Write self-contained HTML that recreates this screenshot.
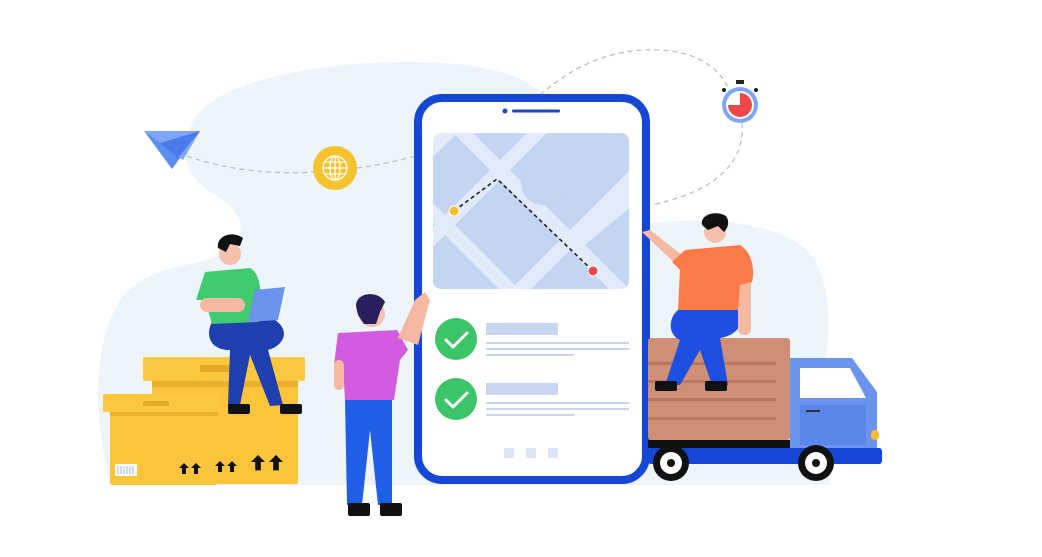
<!DOCTYPE html>
<html><head><meta charset="utf-8"><style>html,body{margin:0;padding:0;background:#fff}svg{display:block}</style></head>
<body>
<svg width="1042" height="557" viewBox="0 0 1042 557" xmlns="http://www.w3.org/2000/svg">
<defs>
<g id="ar"><polygon points="0,-5 5,0 2,0 2,6 -2,6 -2,0 -5,0" fill="#111"/></g>
</defs>
<rect width="1042" height="557" fill="#fff"/>
<!-- background blobs -->
<path d="M190 130 C200 80 330 60 420 62 C520 64 560 90 560 140 L640 140 L640 485 L110 485 C95 420 90 350 120 300 C150 260 200 270 230 250 C250 230 240 210 215 195 C180 175 182 150 190 130 Z" fill="#EEF4FB"/>
<path d="M640 225 C700 215 790 220 815 260 C835 300 830 350 820 380 L830 485 L640 485 Z" fill="#EEF4FB"/>
<!-- dashed routes -->
<path d="M170 150 C220 170 270 175 315 172" fill="none" stroke="#B8C0CC" stroke-width="1.3" stroke-dasharray="5 4"/>
<path d="M357 168 C380 165 400 160 420 155" fill="none" stroke="#B8C0CC" stroke-width="1.3" stroke-dasharray="5 4"/>
<path d="M540 95 C580 60 620 48 660 50 C700 52 720 70 728 88" fill="none" stroke="#B8C0CC" stroke-width="1.3" stroke-dasharray="5 4"/>
<path d="M742 123 C745 160 720 190 652 205" fill="none" stroke="#B8C0CC" stroke-width="1.3" stroke-dasharray="5 4"/>
<!-- plane -->
<path d="M144 131 L200 131 L172 169 Z" fill="#5C8DF0"/>
<path d="M144 131 L200 131 L183 160 Z" fill="#7FA6F5"/>
<path d="M160 143 L200 131 L178 158 Z" fill="#4A7BE8"/>
<!-- globe -->
<circle cx="335" cy="168" r="22" fill="#F6C22E"/>
<g fill="none" stroke="#fff" stroke-width="1.3"><circle cx="335" cy="168" r="12"/><ellipse cx="335" cy="168" rx="5" ry="12"/><line x1="323" y1="168" x2="347" y2="168"/><line x1="325" y1="162" x2="345" y2="162"/><line x1="325" y1="174" x2="345" y2="174"/><line x1="335" y1="156" x2="335" y2="180"/></g>
<!-- timer -->
<rect x="736" y="80" width="8" height="4" fill="#222"/>
<circle cx="740" cy="105" r="18" fill="#7FA6F5"/>
<circle cx="740" cy="105" r="14" fill="#fff"/>
<path d="M740 105 L740 93 A12 12 0 1 1 728 105 Z" fill="#F04848"/>
<circle cx="724" cy="90" r="2" fill="#222"/><circle cx="756" cy="90" r="2" fill="#222"/>
<!-- phone -->
<rect x="418" y="98" width="228" height="382" rx="24" fill="#fff" stroke="#1447D6" stroke-width="8"/>
<circle cx="505" cy="111" r="2.5" fill="#1447D6"/>
<rect x="512" y="109.5" width="48" height="3" rx="1.5" fill="#1447D6"/>
<!-- map -->
<clipPath id="mc"><rect x="433" y="133" width="196" height="156" rx="8"/></clipPath>
<g clip-path="url(#mc)">
<rect x="433" y="133" width="196" height="156" fill="#C3D5F2"/>
<g stroke="#E1EBFA" stroke-width="14" fill="none">
<line x1="440" y1="110" x2="640" y2="310"/>
<line x1="410" y1="190" x2="530" y2="310"/>
<line x1="560" y1="110" x2="420" y2="250"/>
<line x1="660" y1="150" x2="500" y2="310"/>
<line x1="470" y1="110" x2="420" y2="160"/>
<line x1="580" y1="240" x2="640" y2="190"/>
</g>
<circle cx="543" cy="183" r="22" fill="#C3D5F2"/>
</g>
<path d="M454 211 L497 179 L593 271" fill="none" stroke="#222" stroke-width="1.6" stroke-dasharray="4 3"/>
<circle cx="454" cy="211" r="5" fill="#F5BE2A" stroke="#fff" stroke-width="1"/>
<circle cx="593" cy="271" r="5" fill="#F04848" stroke="#fff" stroke-width="1"/>
<!-- checks -->
<circle cx="456" cy="339" r="21" fill="#3CC469"/>
<path d="M446 340 L453 347 L467 333" fill="none" stroke="#fff" stroke-width="3" stroke-linecap="round" stroke-linejoin="round"/>
<circle cx="456" cy="399" r="21" fill="#3CC469"/>
<path d="M446 400 L453 407 L467 393" fill="none" stroke="#fff" stroke-width="3" stroke-linecap="round" stroke-linejoin="round"/>
<g fill="#C8D6F2">
<rect x="486" y="323" width="72" height="12"/><rect x="486" y="342" width="143" height="2"/><rect x="486" y="348" width="143" height="2"/><rect x="486" y="354" width="88" height="2"/>
<rect x="486" y="383" width="72" height="12"/><rect x="486" y="402" width="143" height="2"/><rect x="486" y="408" width="143" height="2"/><rect x="486" y="414" width="88" height="2"/>
</g>
<g fill="#DCE5F7"><rect x="504" y="448" width="10" height="10"/><rect x="526" y="448" width="10" height="10"/><rect x="548" y="448" width="10" height="10"/></g>
<!-- boxes -->
<rect x="152" y="380" width="146" height="104" fill="#FBC43A"/>
<rect x="143" y="357" width="162" height="24" rx="2" fill="#FCC840"/>
<rect x="152" y="381" width="146" height="6" fill="#EBB02C"/>
<rect x="200" y="365" width="37" height="7" fill="#E5AA2A"/>
<rect x="110" y="412" width="108" height="73" rx="3" fill="#FBC43A"/>
<rect x="103" y="394" width="117" height="18" rx="2" fill="#FCC840"/>
<rect x="110" y="412" width="108" height="4" fill="#EBB02C"/>
<rect x="143" y="401" width="26" height="5" fill="#E5AA2A"/>
<rect x="115" y="464" width="22" height="12" fill="#fff"/>
<g stroke="#9CB4E8" stroke-width="1"><line x1="118" y1="466" x2="118" y2="474"/><line x1="121" y1="466" x2="121" y2="474"/><line x1="124" y1="466" x2="124" y2="474"/><line x1="127" y1="466" x2="127" y2="474"/><line x1="130" y1="466" x2="130" y2="474"/><line x1="133" y1="466" x2="133" y2="474"/></g>
<use href="#ar" x="184" y="468"/><use href="#ar" x="196" y="468"/>
<use href="#ar" x="220" y="466"/><use href="#ar" x="232" y="466"/>
<g transform="translate(258 462) scale(1.4)"><use href="#ar"/></g>
<g transform="translate(276 462) scale(1.4)"><use href="#ar"/></g>
<!-- green man -->
<path d="M212 322 L275 320 C290 330 285 345 268 350 L283 405 L270 406 L250 355 L245 380 L240 405 L228 405 L230 350 C210 350 205 335 212 322 Z" fill="#1E3FAE"/>
<rect x="228" y="404" width="22" height="10" rx="2" fill="#111"/>
<rect x="280" y="404" width="22" height="10" rx="2" fill="#111"/>
<path d="M205 272 L250 268 C262 275 262 295 258 322 L212 324 L205 300 L196 300 Z" fill="#3FCB6E"/>
<rect x="200" y="298" width="45" height="14" rx="7" fill="#F5B9A2"/>
<path d="M255 290 L285 287 L278 320 L248 322 Z" fill="#6C93EE"/>
<circle cx="230" cy="254" r="11" fill="#F5C1AC"/>
<path d="M218 248 C216 236 232 230 243 238 L240 246 L230 244 L226 252 Z" fill="#111"/>
<!-- purple man -->
<path d="M345 398 L392 398 L392 505 L378 505 L370 430 L362 505 L347 505 Z" fill="#1E5FE6"/>
<rect x="348" y="503" width="22" height="13" rx="2" fill="#111"/>
<rect x="380" y="503" width="22" height="13" rx="2" fill="#111"/>
<path d="M338 333 L397 330 L408 350 L400 360 L394 400 L345 400 L343 365 L334 365 Z" fill="#D25BE0"/>
<rect x="334" y="360" width="10" height="30" rx="5" fill="#F5B9A2"/>
<path d="M398 338 L415 300 L425 292 L430 300 L418 345 Z" fill="#F5B9A2"/>
<circle cx="372" cy="314" r="13" fill="#F5C1AC"/>
<path d="M356 306 C356 292 378 290 385 302 L380 312 L376 324 L364 324 L358 315 Z" fill="#2A1F5E"/>
<!-- truck -->
<rect x="648" y="338" width="142" height="102" rx="3" fill="#CE8F74"/>
<g fill="#B87562"><rect x="648" y="362" width="128" height="3"/><rect x="648" y="380" width="128" height="3"/><rect x="648" y="398" width="128" height="3"/><rect x="648" y="417" width="128" height="3"/></g>
<path d="M790 358 L852 358 L877 392 L877 450 L790 450 Z" fill="#6C93EE"/>
<path d="M800 368 L850 368 L866 398 L800 398 Z" fill="#fff"/>
<rect x="800" y="405" width="66" height="40" fill="#5A86EC"/>
<rect x="806" y="410" width="14" height="2" fill="#333"/>
<rect x="871" y="430" width="8" height="10" rx="4" fill="#F5BE2A"/>
<rect x="648" y="440" width="142" height="8" fill="#111"/>
<rect x="648" y="448" width="234" height="16" rx="3" fill="#1447D6"/>
<circle cx="671" cy="463" r="18" fill="#111"/><circle cx="671" cy="463" r="11" fill="#fff"/><circle cx="671" cy="463" r="4" fill="#111"/>
<circle cx="816" cy="463" r="18" fill="#111"/><circle cx="816" cy="463" r="11" fill="#fff"/><circle cx="816" cy="463" r="4" fill="#111"/>
<!-- orange man -->
<path d="M678 310 L740 308 C745 320 740 335 720 338 L728 385 L712 385 L700 350 L680 385 L665 385 L680 340 C668 335 668 318 678 310 Z" fill="#1D50E0"/>
<rect x="655" y="381" width="22" height="10" rx="2" fill="#111"/>
<rect x="705" y="381" width="22" height="10" rx="2" fill="#111"/>
<path d="M642 232 L650 230 L682 255 L680 268 Z" fill="#F5B9A2"/>
<rect x="738" y="275" width="13" height="60" rx="6" fill="#F5B9A2"/>
<path d="M685 250 L740 245 C752 252 755 270 752 282 L740 285 L738 310 L678 310 L680 270 L672 262 Z" fill="#FB7A47"/>
<circle cx="715" cy="232" r="11" fill="#F5C1AC"/>
<path d="M702 225 C700 214 716 210 726 216 C730 222 728 228 724 232 L718 226 L708 230 Z" fill="#111"/>
</svg>
</body></html>
